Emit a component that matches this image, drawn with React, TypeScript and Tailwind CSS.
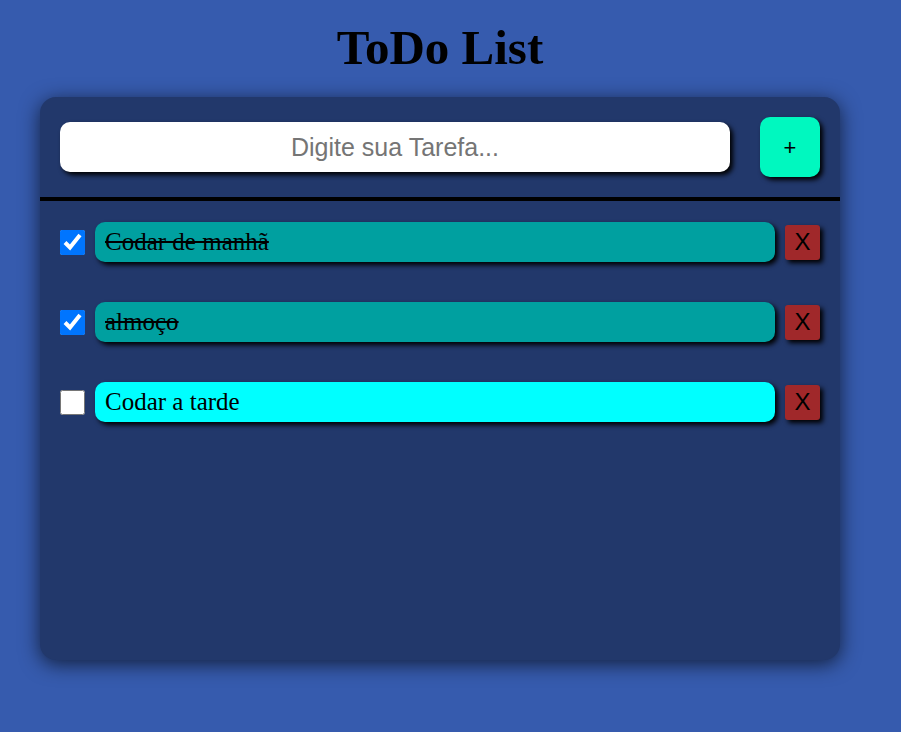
import { useState } from "react";

const initial = [
  { id: 1, text: "Codar de manhã", done: true },
  { id: 2, text: "almoço", done: true },
  { id: 3, text: "Codar a tarde", done: false },
];

export default function App() {
  const [tasks, setTasks] = useState(initial);
  const [value, setValue] = useState("");

  const toggle = (id: number) =>
    setTasks(tasks.map((t) => (t.id === id ? { ...t, done: !t.done } : t)));

  return (
    <div className="min-h-[732px] w-full bg-[#365bae] flex flex-col items-center pr-[21px]">
      <h1 className="mt-[19px] text-[49px] font-bold leading-[58px] text-black font-['Liberation_Serif',serif]">
        ToDo List
      </h1>
      <div className="mt-[20px] w-[800px] h-[563px] rounded-2xl bg-[#22386b] shadow-[0_4px_20px_rgba(0,0,0,0.65)]">
        <div className="flex items-center justify-between px-5 pt-5 pb-5">
          <input
            value={value}
            onChange={(e) => setValue(e.target.value)}
            placeholder="Digite sua Tarefa..."
            className="w-[670px] h-[50px] rounded-[10px] bg-white text-center text-[25px] text-black placeholder:text-[#757575] shadow-[3px_3px_5px_black] outline-none font-['Liberation_Sans',Arial,sans-serif]"
          />
          <button className="w-[60px] h-[60px] rounded-[10px] bg-[#00f8bf] text-[22px] text-black shadow-[3px_3px_5px_black] font-['Liberation_Sans',Arial,sans-serif]">
            +
          </button>
        </div>
        <div className="h-[4px] bg-black" />
        <ul className="flex flex-col gap-[40px] px-5 pt-[21px]">
          {tasks.map((t) => (
            <li key={t.id} className="flex items-center gap-[10px] h-[40px]">
              <input
                type="checkbox"
                checked={t.done}
                onChange={() => toggle(t.id)}
                className="m-0 w-[25px] h-[25px] accent-[#0075ff]"
              />
              <span
                className={`flex-1 h-[40px] flex items-center px-[10px] rounded-[10px] text-[25px] text-black shadow-[3px_3px_5px_black] font-['Liberation_Serif',serif] ${
                  t.done ? "bg-[#00a0a0] line-through" : "bg-[#00ffff]"
                }`}
              >
                {t.text}
              </span>
              <button className="w-[35px] h-[35px] rounded-[3px] bg-[#a0282a] text-[24px] leading-none text-black shadow-[3px_3px_5px_black] font-['Liberation_Sans',Arial,sans-serif]">
                X
              </button>
            </li>
          ))}
        </ul>
      </div>
    </div>
  );
}
